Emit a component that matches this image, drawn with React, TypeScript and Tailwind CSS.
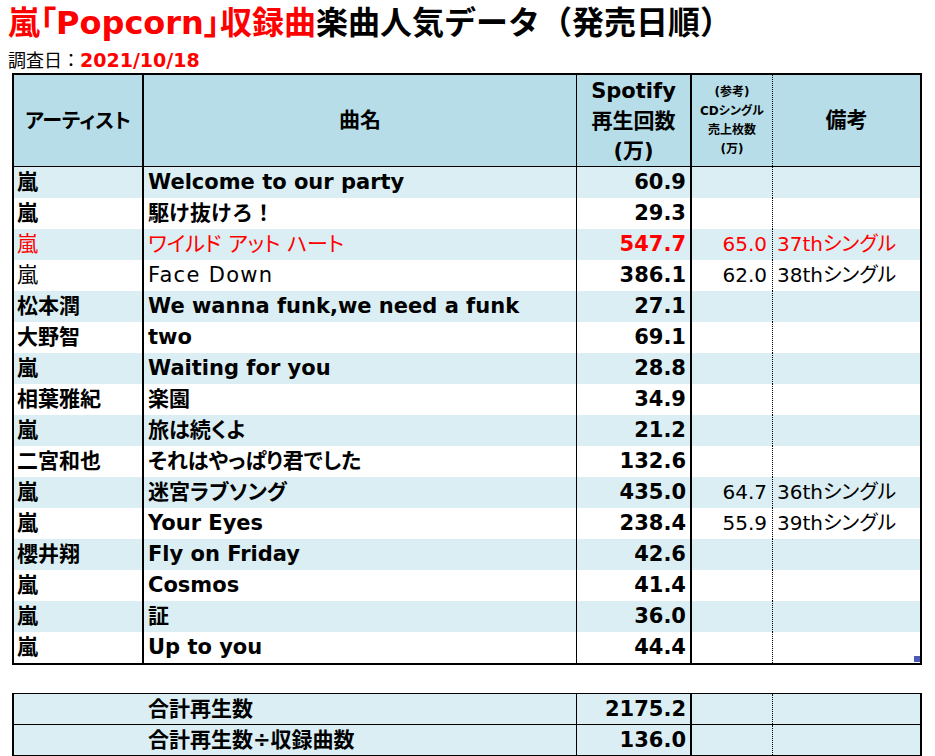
type Row = {
  artist: string;
  title: string;
  plays: string;
  cd?: string;
  note?: string;
  red?: boolean;
  light?: boolean;
  wide?: boolean;
};

const rows: Row[] = [
  { artist: '嵐', title: 'Welcome to our party', plays: '60.9' },
  { artist: '嵐', title: '駆け抜けろ！', plays: '29.3', wide: true },
  { artist: '嵐', title: 'ワイルド アット ハート', plays: '547.7', cd: '65.0', note: '37thシングル', red: true, light: true },
  { artist: '嵐', title: 'Face Down', plays: '386.1', cd: '62.0', note: '38thシングル', light: true },
  { artist: '松本潤', title: 'We wanna funk,we need a funk', plays: '27.1' },
  { artist: '大野智', title: 'two', plays: '69.1' },
  { artist: '嵐', title: 'Waiting for you', plays: '28.8' },
  { artist: '相葉雅紀', title: '楽園', plays: '34.9' },
  { artist: '嵐', title: '旅は続くよ', plays: '21.2' },
  { artist: '二宮和也', title: 'それはやっぱり君でした', plays: '132.6' },
  { artist: '嵐', title: '迷宮ラブソング', plays: '435.0', cd: '64.7', note: '36thシングル' },
  { artist: '嵐', title: 'Your Eyes', plays: '238.4', cd: '55.9', note: '39thシングル' },
  { artist: '櫻井翔', title: 'Fly on Friday', plays: '42.6' },
  { artist: '嵐', title: 'Cosmos', plays: '41.4' },
  { artist: '嵐', title: '証', plays: '36.0' },
  { artist: '嵐', title: 'Up to you', plays: '44.4' },
];

export default function App() {
  return (
    <div className="w-[935px] h-[756px] overflow-hidden bg-white text-black font-['DejaVu_Sans','Noto_Sans_CJK_JP',sans-serif] [font-feature-settings:'palt']">
      <div className="h-[47px] pl-2 text-[32px] font-bold leading-[47px] whitespace-nowrap [font-feature-settings:normal]">
        <span className="text-[#ff0000]">
          嵐<span className="[font-feature-settings:'palt']">「</span>Popcorn
          <span className="[font-feature-settings:'palt']">」</span>収録曲
        </span>
        楽曲人気データ（発売日順）
      </div>
      <div className="h-[26px] pl-2 text-[18px] leading-[26px] whitespace-nowrap [font-feature-settings:normal]">
        調査日：<span className="font-bold text-[19px] text-[#ff0000]">2021/10/18</span>
      </div>

      {/* main table */}
      <div className="ml-3 w-[910px] border-2 border-black">
        <div className="grid grid-cols-[130px_433px_115px_81px_147px] h-[92px] bg-[#b7dee8] border-b border-black font-bold">
          <div className="flex items-center justify-center border-r-2 border-black text-[20px]">アーティスト</div>
          <div className="flex items-center justify-center border-r border-black text-[21px]">曲名</div>
          <div className="flex flex-col items-center justify-center border-r-2 border-black text-[21px] leading-[30px]">
            <span>Spotify</span>
            <span>再生回数</span>
            <span>(万)</span>
          </div>
          <div className="flex flex-col items-center justify-center border-r border-dotted border-black text-[12px] leading-[19px]">
            <span>(参考)</span>
            <span>CDシングル</span>
            <span>売上枚数</span>
            <span>(万)</span>
          </div>
          <div className="flex items-center justify-center text-[21px]">備考</div>
        </div>

        {rows.map((r, i) => (
          <div
            key={i}
            className={
              'grid grid-cols-[130px_433px_115px_81px_147px] h-[31px] leading-[31px] whitespace-nowrap ' +
              (i % 2 === 0 ? 'bg-[#daeef3] ' : 'bg-white ') +
              (r.red ? 'text-[#ff0000]' : 'text-black')
            }
          >
            <div className={'border-r-2 border-black pl-[3px] text-[21px] ' + (r.light ? 'font-normal' : 'font-bold')}>
              {r.artist}
            </div>
            <div
              className={
                'border-r border-black pl-[4px] text-[21px] ' +
                (r.light ? 'font-normal ' : 'font-bold ') +
                (r.title === 'Face Down' ? 'tracking-[1.3px] ' : '') +
                (r.wide ? '[font-feature-settings:normal]' : '')
              }
            >
              {r.title}
            </div>
            <div className="border-r-2 border-black pr-[4px] text-right text-[21px] font-bold">{r.plays}</div>
            <div className="border-r border-dotted border-black pr-[5px] text-right text-[20px]">{r.cd}</div>
            <div className="relative pl-[4px] text-[20px]">
              {r.note}
              {i === rows.length - 1 && (
                <span className="absolute bottom-[1px] right-0 w-[6px] h-[6px] bg-[#4b5cb8]" />
              )}
            </div>
          </div>
        ))}
      </div>

      {/* totals */}
      <div className="mt-[28px] ml-3 w-[910px] border-x-2 border-y border-black bg-[#daeef3] font-bold text-[21px] leading-[30px] whitespace-nowrap">
        <div className="grid grid-cols-[563px_115px_81px_147px] h-[31px] border-b border-black">
          <div className="border-r border-black pl-[134px]">合計再生数</div>
          <div className="border-r-2 border-black pr-[4px] text-right">2175.2</div>
          <div className="border-r border-dotted border-black"></div>
          <div></div>
        </div>
        <div className="grid grid-cols-[563px_115px_81px_147px] h-[30px]">
          <div className="border-r border-black pl-[134px]">合計再生数÷収録曲数</div>
          <div className="border-r-2 border-black pr-[4px] text-right">136.0</div>
          <div className="border-r border-dotted border-black"></div>
          <div></div>
        </div>
      </div>
    </div>
  );
}
